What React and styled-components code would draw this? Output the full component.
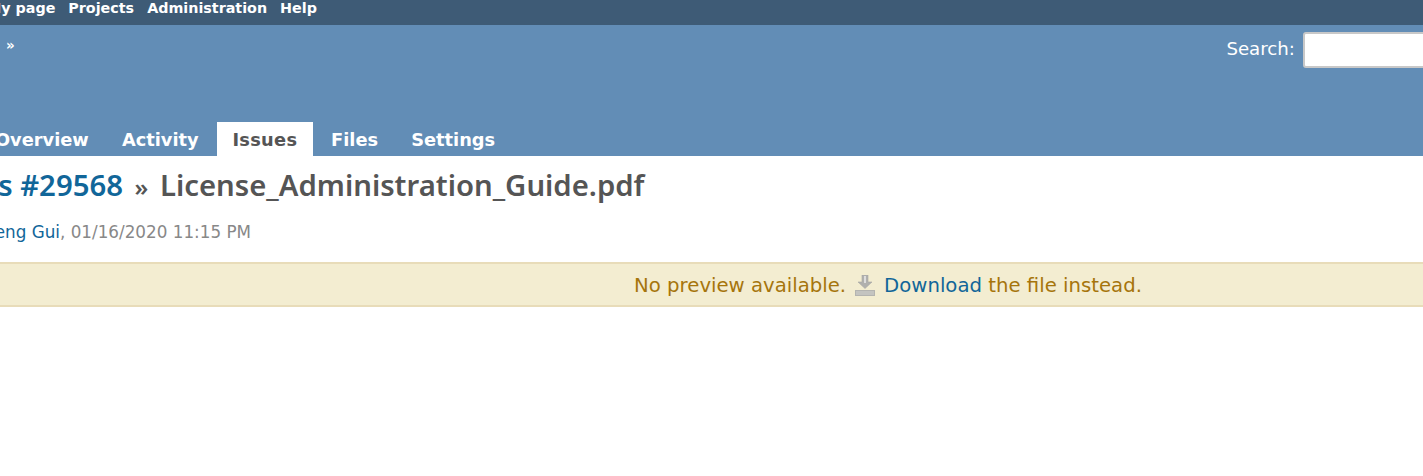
import React from 'react';
import styled, { createGlobalStyle } from 'styled-components';

const Global = createGlobalStyle`
    html, body {
        margin: 0;
        padding: 0;
        background: #fff;
        overflow: hidden;
    }
    body {
        font-family: 'DejaVu Sans', Verdana, sans-serif;
        color: #484848;
    }
`;

const Page = styled.div`
    width: 1423px;
    height: 476px;
    overflow: hidden;
`;

const TopMenu = styled.nav`
    height: 25px;
    background: #3e5b76;
    display: flex;
    gap: 13px;
    margin-left: -13px;
    font-size: 14.3px;
    font-weight: bold;
    line-height: 16px;
`;

const TopLink = styled.a`
    color: #fff;
    white-space: nowrap;
`;

const Header = styled.header`
    height: 131px;
    background: #628db6;
    display: flex;
    flex-direction: column;
    justify-content: space-between;
`;

const HeaderRow = styled.div`
    display: flex;
    justify-content: space-between;
    padding-top: 7px;
    padding-left: 6px;
`;

const Crumb = styled.span`
    color: #fff;
    font-size: 13.5px;
    font-weight: bold;
    line-height: 26px;
`;

const SearchBox = styled.label`
    display: flex;
    align-items: flex-start;
    gap: 8px;
    color: #fff;
    font-size: 18.2px;
    line-height: 33px;
    margin-right: -56px;
`;

const SearchInput = styled.input`
    width: 176px;
    height: 36px;
    box-sizing: border-box;
    background: #fff;
    border: 2px solid #c8c8c8;
    border-radius: 3px;
`;

const Tabs = styled.ul`
    display: flex;
    gap: 3.2px;
    margin: 0 0 0 -20px;
    padding: 0;
    list-style: none;
`;

const Tab = styled.li`
    height: 34px;
    padding: 0 ${(p) => (p.$active ? '15.6px' : '15px')};
    display: flex;
    align-items: center;
    box-sizing: border-box;
    font-size: 17.8px;
    font-weight: bold;
    letter-spacing: ${(p) => (p.$active ? '0.3px' : '0')};
    color: ${(p) => (p.$active ? '#555' : '#fff')};
    background: ${(p) => (p.$active ? '#fff' : 'transparent')};
`;

const Content = styled.main`
    display: flex;
    flex-direction: column;
`;

const Title = styled.h2`
    margin: 11px 0 0 -65px;
    font-family: 'Noto Sans', sans-serif;
    font-size: 29.3px;
    font-weight: 600;
    line-height: 36px;
    color: #555;
    white-space: nowrap;
`;

const IssueLink = styled.a`
    color: #169;
`;

const Sep = styled.span`
    font-size: 24px;
    margin: 0 4px;
`;

const Attr = styled.p`
    margin: 17px 0 0 -14px;
    font-size: 16.8px;
    line-height: 20px;
    color: #888;
`;

const Author = styled.a`
    color: #169;
`;

const Notice = styled.div`
    margin-top: 20px;
    height: 45px;
    box-sizing: border-box;
    border-top: 2px solid #e8dcb9;
    border-bottom: 2px solid #e8dcb9;
    background: #f3edd1;
    color: #a6750c;
    font-size: 19.7px;
    display: flex;
    align-items: center;
    justify-content: center;
    gap: 9px;
    padding: 1px 0 0 353px;
    white-space: nowrap;
`;

const DownloadLink = styled.a`
    color: #169;
`;

const DownloadIcon = () => (
    <svg width="20" height="21" viewBox="0 0 20 21" style={{ flex: 'none' }}>
        <path d="M7 0h6v7h4l-7 6.5-7-6.5h4z" fill="#b0b0ae" stroke="#a8a8a4" strokeWidth="0.6" />
        <path d="M9 1h2v7H9z" fill="#ddd" />
        <rect x="0.5" y="15.5" width="19" height="5" fill="#c4c4c0" stroke="#b4b4b0" />
    </svg>
);

export default function App() {
    return (
        <Page>
            <Global />
            <TopMenu>
                <TopLink>My page</TopLink>
                <TopLink>Projects</TopLink>
                <TopLink>Administration</TopLink>
                <TopLink>Help</TopLink>
            </TopMenu>
            <Header>
                <HeaderRow>
                    <Crumb>»</Crumb>
                    <SearchBox>
                        Search:
                        <SearchInput />
                    </SearchBox>
                </HeaderRow>
                <Tabs>
                    <Tab>Overview</Tab>
                    <Tab>Activity</Tab>
                    <Tab $active>Issues</Tab>
                    <Tab>Files</Tab>
                    <Tab>Settings</Tab>
                </Tabs>
            </Header>
            <Content>
                <Title>
                    <IssueLink>Tasks #29568</IssueLink> <Sep>»</Sep> License_Administration_Guide.pdf
                </Title>
                <Attr>
                    <Author>Feng Gui</Author>, 01/16/2020 11:15 PM
                </Attr>
                <Notice>
                    No preview available.
                    <DownloadIcon />
                    <span>
                        <DownloadLink>Download</DownloadLink> the file instead.
                    </span>
                </Notice>
            </Content>
        </Page>
    );
}
